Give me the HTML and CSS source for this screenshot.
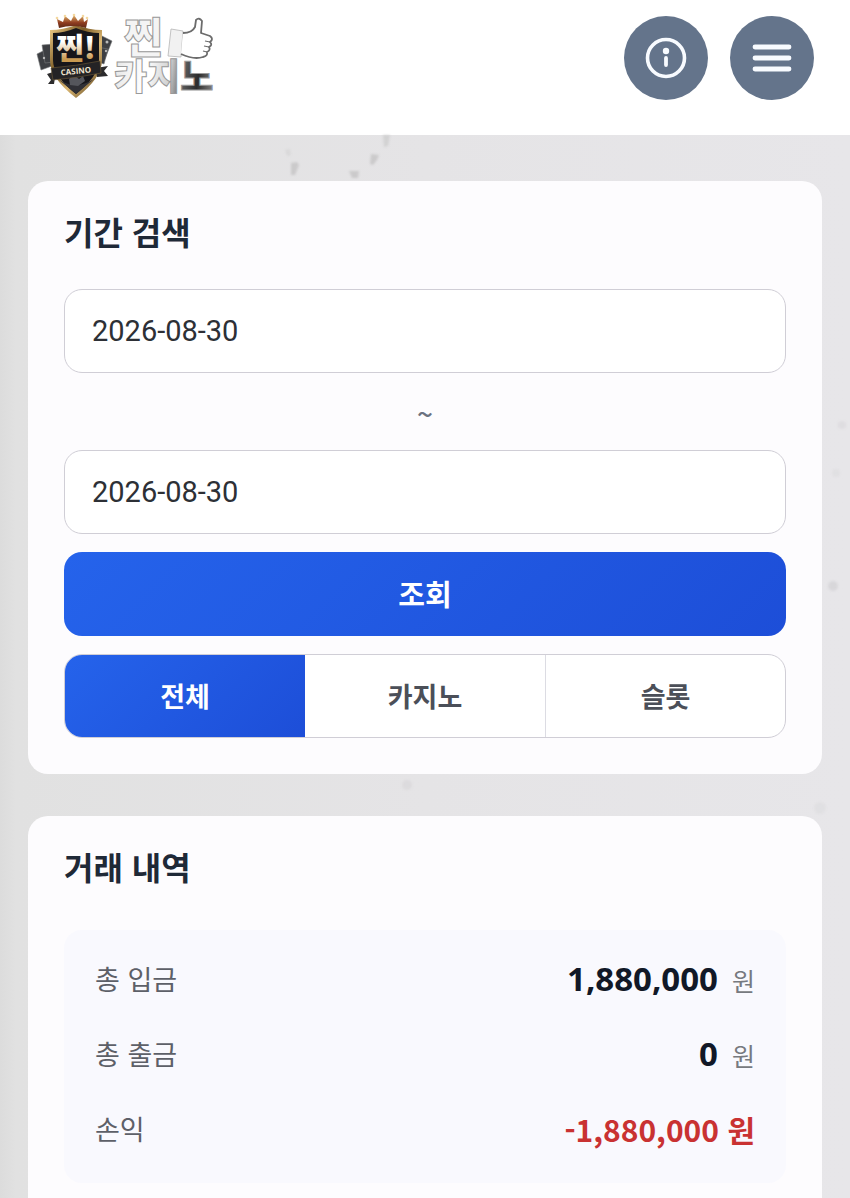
FILE: index.html
```html
<!DOCTYPE html>
<html lang="ko">
<head>
  <meta charset="UTF-8">
  <meta name="viewport" content="width=device-width, initial-scale=1.0">
  <title>찐카지노 - 거래 내역</title>
  <link rel="stylesheet" href="styles.css">
</head>
<body>
  <header class="header">
    <a href="#" class="logo" aria-label="찐카지노">
      <svg width="184" height="110" viewBox="36 0 184 110">
        <defs>
          <linearGradient id="gold" x1="0" y1="0" x2="1" y2="1">
            <stop offset="0" stop-color="#f3d18b"/>
            <stop offset="0.35" stop-color="#7a5a25"/>
            <stop offset="0.6" stop-color="#dcb873"/>
            <stop offset="1" stop-color="#4a3413"/>
          </linearGradient>
          <linearGradient id="crown" x1="0" y1="0" x2="0" y2="1">
            <stop offset="0" stop-color="#e5b86b"/>
            <stop offset="0.6" stop-color="#8e3b20"/>
            <stop offset="1" stop-color="#5c2a16"/>
          </linearGradient>
          <linearGradient id="letters" x1="0" y1="0" x2="0" y2="1">
            <stop offset="0.4" stop-color="#ffffff"/>
            <stop offset="0.8" stop-color="#c99a50"/>
          </linearGradient>
          <linearGradient id="silver" gradientUnits="userSpaceOnUse" x1="115" y1="70" x2="212" y2="84">
            <stop offset="0" stop-color="#e8e8e8"/>
            <stop offset="0.3" stop-color="#ffffff"/>
            <stop offset="0.55" stop-color="#d2d2d2"/>
            <stop offset="0.72" stop-color="#555555"/>
            <stop offset="0.85" stop-color="#2c2c2c"/>
            <stop offset="1" stop-color="#777777"/>
          </linearGradient>
        </defs>

        <!-- cards behind the shield -->
        <g fill="#3d3f43" stroke="#77787b" stroke-width="0.6">
          <path d="M37 54 L47 49 L52 66 L41 70 Z"/>
          <path d="M42 45 L54 44 L54 62 L45 63 Z"/>
          <path d="M98 34 L112 41 L105 59 L94 54 Z"/>
          <path d="M97 47 L108 49 L104 64 L95 61 Z"/>
        </g>
        <g fill="#b9b9b9">
          <circle cx="44" cy="58" r="1.2"/>
          <circle cx="107" cy="42" r="1.5"/>
          <circle cx="106" cy="51" r="1.2"/>
        </g>

        <!-- shield -->
        <path d="M76 25 Q63 30 50 30 V60 Q50 78 76 98 Q102 78 102 60 V30 Q89 30 76 25 Z" fill="url(#gold)"/>
        <path d="M76 28 Q64 33 53 33 V60 Q53 76 76 94 Q99 76 99 60 V33 Q88 33 76 28 Z" fill="#17161a"/>
        <path d="M58 79 Q75 91 94 79 L76 94 Z" fill="#303036"/>
        <path d="M69 79 l5 -4 5 4 4 -3 2 5 -7 5 -8 -1 z" fill="#55565c"/>

        <!-- crown -->
        <path d="M59 28 L57 19 L63 22 L65 16 L71 21 L74 15 L78 21 L83 16 L84 22 L88 19 L86 28 Q73 24 59 28 Z" fill="url(#crown)"/>
        <g fill="#f4d9a0">
          <circle cx="57" cy="18" r="1.3"/>
          <circle cx="65" cy="16" r="1.3"/>
          <circle cx="74" cy="15" r="1.3"/>
          <circle cx="83" cy="16" r="1.3"/>
          <circle cx="87" cy="18" r="1.3"/>
        </g>
        <text class="logo-badge" x="76" y="59">찐!</text>

        <!-- ribbon -->
        <path d="M47 74 L56 71 L54 84 L48 84 L51 80 Z" fill="#2c2b2c"/>
        <path d="M96 68 L108 66 L104 71 L108 76 L97 77 Z" fill="#2c2b2c"/>
        <path d="M51 68 Q76 66 100 61 L101 73 Q77 78 53 80 Z" fill="#242325" stroke="#6f5a38" stroke-width="0.6"/>
        <text class="logo-ribbon" x="76" y="74" transform="rotate(-6 76 72)">CASINO</text>

        <!-- wordmark -->
        <text class="logo-word"><tspan class="logo-word-top" x="124" y="53">찐</tspan><tspan x="114" y="90">카지노</tspan></text>
        <path d="M171 29 L183 31 L181 57 L168 56 Z" fill="#f1f1f1" stroke="#b5b5b5" stroke-width="0.8"/>
        <path d="M183 33 Q192 33 195 27 L196 20 Q199 17 202 21 L201 33 L210 36 Q214 39 210 42 Q213 45 209 47 Q211 50 207 52 Q208 56 203 57 Q194 60 181 54" fill="#fff" stroke="#6c6c6c" stroke-width="1.8" stroke-linejoin="round"/>
        <path d="M210 42 L205 41 M209 47 L204 46 M207 52 L203 51" stroke="#6c6c6c" stroke-width="1.2" fill="none"/>
      </svg>
    </a>

    <div class="header-actions">
      <button type="button" class="icon-btn" aria-label="안내">
        <svg width="44" height="44" viewBox="0 0 44 44" fill="none">
          <circle cx="22" cy="22" r="18.5" stroke="currentColor" stroke-width="3.6"/>
          <circle cx="22" cy="15" r="3.2" fill="currentColor"/>
          <path d="M22 22 V29" stroke="currentColor" stroke-width="3.8" stroke-linecap="round"/>
        </svg>
      </button>
      <button type="button" class="icon-btn" aria-label="메뉴">
        <svg width="44" height="44" viewBox="0 0 44 44" fill="none" stroke="currentColor" stroke-width="4.8" stroke-linecap="round">
          <path d="M5 11 H39 M5 22 H39 M5 33 H39"/>
        </svg>
      </button>
    </div>
  </header>

  <main class="content">
    <!-- background specks -->
    <svg class="specks" width="850" height="700" viewBox="0 135 850 700" aria-hidden="true">
      <g fill="#cbcacb">
        <path d="M291 163 l6 -1 2 3 -4 10 -4 0 z"/>
        <path d="M285 150 l5 -1 1 6 -4 1 z" opacity="0.4"/>
        <path d="M371 154 l8 1 -2 5 -4 5 -3 -1 z"/>
        <path d="M383 135 l7 0 -2 11 -4 1 z" opacity="0.7"/>
        <path d="M349 171 l10 0 -1 7 -6 0 z"/>
      </g>
      <g fill="#d8d7da">
        <circle cx="833" cy="586" r="5"/>
        <circle cx="842" cy="425" r="4" opacity="0.6"/>
        <circle cx="836" cy="473" r="4" opacity="0.4"/>
        <circle cx="407" cy="785" r="5" opacity="0.7"/>
        <circle cx="820" cy="808" r="6" opacity="0.4"/>
      </g>
    </svg>

    <section class="card">
      <h2 class="card-title">기간 검색</h2>
      <form class="search-form">
        <input type="text" class="date-input" value="2026-08-30" aria-label="시작일">
        <span class="tilde">~</span>
        <input type="text" class="date-input" value="2026-08-30" aria-label="종료일">
        <button type="button" class="search-btn">조회</button>
        <div class="tabs">
          <button type="button" class="tab active">전체</button>
          <button type="button" class="tab">카지노</button>
          <button type="button" class="tab">슬롯</button>
        </div>
      </form>
    </section>

    <section class="card">
      <h2 class="card-title">거래 내역</h2>
      <dl class="summary">
        <div class="summary-row">
          <dt>총 입금</dt>
          <dd><span class="amount">1,880,000</span><span class="unit">원</span></dd>
        </div>
        <div class="summary-row">
          <dt>총 출금</dt>
          <dd><span class="amount">0</span><span class="unit">원</span></dd>
        </div>
        <div class="summary-row">
          <dt>손익</dt>
          <dd class="loss">-1,880,000 원</dd>
        </div>
      </dl>
    </section>
  </main>
</body>
</html>
```
FILE: styles.css
```css
* {
  box-sizing: border-box;
}
body {
  margin: 0;
  font-family: "Noto Sans CJK KR", sans-serif;
  background: linear-gradient(90deg, #dcdcdc 0, #e1e1e1 16px, #e5e4e6 50%, #e7e6e9 100%);
  color: #1f2937;
}
.header {
  display: flex;
  justify-content: space-between;
  align-items: flex-start;
  min-height: 135px;
  padding: 0 36px;
  background-color: #fff;
}
.logo svg {
  display: block;
}
.logo-badge {
  font-size: 30px;
  font-weight: 900;
  text-anchor: middle;
  fill: url(#letters);
}
.logo-ribbon {
  font-family: "Open Sans", sans-serif;
  font-size: 8px;
  font-weight: 700;
  text-anchor: middle;
  fill: #f1e6d2;
}
.logo-word {
  font-size: 36px;
  font-weight: 900;
  fill: url(#silver);
  stroke: #999;
  stroke-width: 1px;
}
.logo-word-top {
  font-size: 42px;
  fill: #f4f4f4;
}
.header-actions {
  display: flex;
  gap: 22px;
  padding-top: 16px;
}
.icon-btn {
  display: flex;
  align-items: center;
  justify-content: center;
  width: 84px;
  height: 84px;
  padding: 0;
  border: none;
  border-radius: 50%;
  background-color: #64748b;
  color: #f8fbff;
  cursor: pointer;
}
.content {
  position: relative;
  display: flex;
  flex-direction: column;
  gap: 42px;
  padding: 46px 28px 0;
}
.specks {
  position: absolute;
  top: 0;
  left: 0;
  filter: blur(1px);
}
.card {
  position: relative;
  padding: 34px 36px 36px;
  border-radius: 20px;
  background-color: #fdfcfe;
}
.card-title {
  margin: 0 0 42px;
  font-size: 32px;
  line-height: 32px;
  font-weight: 700;
}
.search-form {
  display: flex;
  flex-direction: column;
  gap: 18px;
}
.date-input {
  width: 100%;
  height: 84px;
  padding: 0 27px;
  border: 1px solid #d0ced6;
  border-radius: 18px;
  background-color: #fff;
  font-family: Roboto, sans-serif;
  font-size: 29px;
  color: #2d3036;
}
.tilde {
  height: 41px;
  line-height: 44px;
  text-align: center;
  font-size: 28px;
  font-weight: 500;
  color: #6b7280;
}
.search-btn {
  height: 84px;
  padding: 0 0 2px;
  border: none;
  border-radius: 18px;
  background: linear-gradient(135deg, #2563eb, #1d4ed8);
  color: #fff;
  font-family: inherit;
  font-size: 29px;
  font-weight: 700;
  cursor: pointer;
}
.tabs {
  display: grid;
  grid-template-columns: repeat(3, 1fr);
  height: 84px;
  border: 1px solid #d0ced6;
  border-radius: 18px;
  overflow: hidden;
  background-color: #fff;
}
.tab {
  padding: 0 0 2px;
  border: none;
  border-left: 1px solid #dcdce3;
  background: none;
  color: #4b4f58;
  font-family: inherit;
  font-size: 27px;
  font-weight: 700;
  cursor: pointer;
}
.tab.active {
  border-left: none;
  background: linear-gradient(135deg, #2563eb, #1d4ed8);
  color: #fff;
}
.tab.active + .tab {
  border-left: none;
}
.summary {
  margin: 48px 0 0;
  padding: 11px 31px 17px;
  border-radius: 18px;
  background-color: #f9f9fe;
}
.summary-row {
  display: flex;
  align-items: center;
  justify-content: space-between;
  height: 75px;
}
.summary dt {
  font-size: 27px;
  color: #5d6068;
}
.summary dd {
  display: flex;
  align-items: baseline;
  gap: 14px;
  margin: 0;
}
.amount {
  font-family: "Noto Sans", sans-serif;
  font-size: 33px;
  font-weight: 700;
  color: #111827;
}
.unit {
  font-size: 25px;
  color: #777a80;
}
.summary .loss {
  font-size: 30px;
  font-weight: 700;
  color: #c93232;
}
```
